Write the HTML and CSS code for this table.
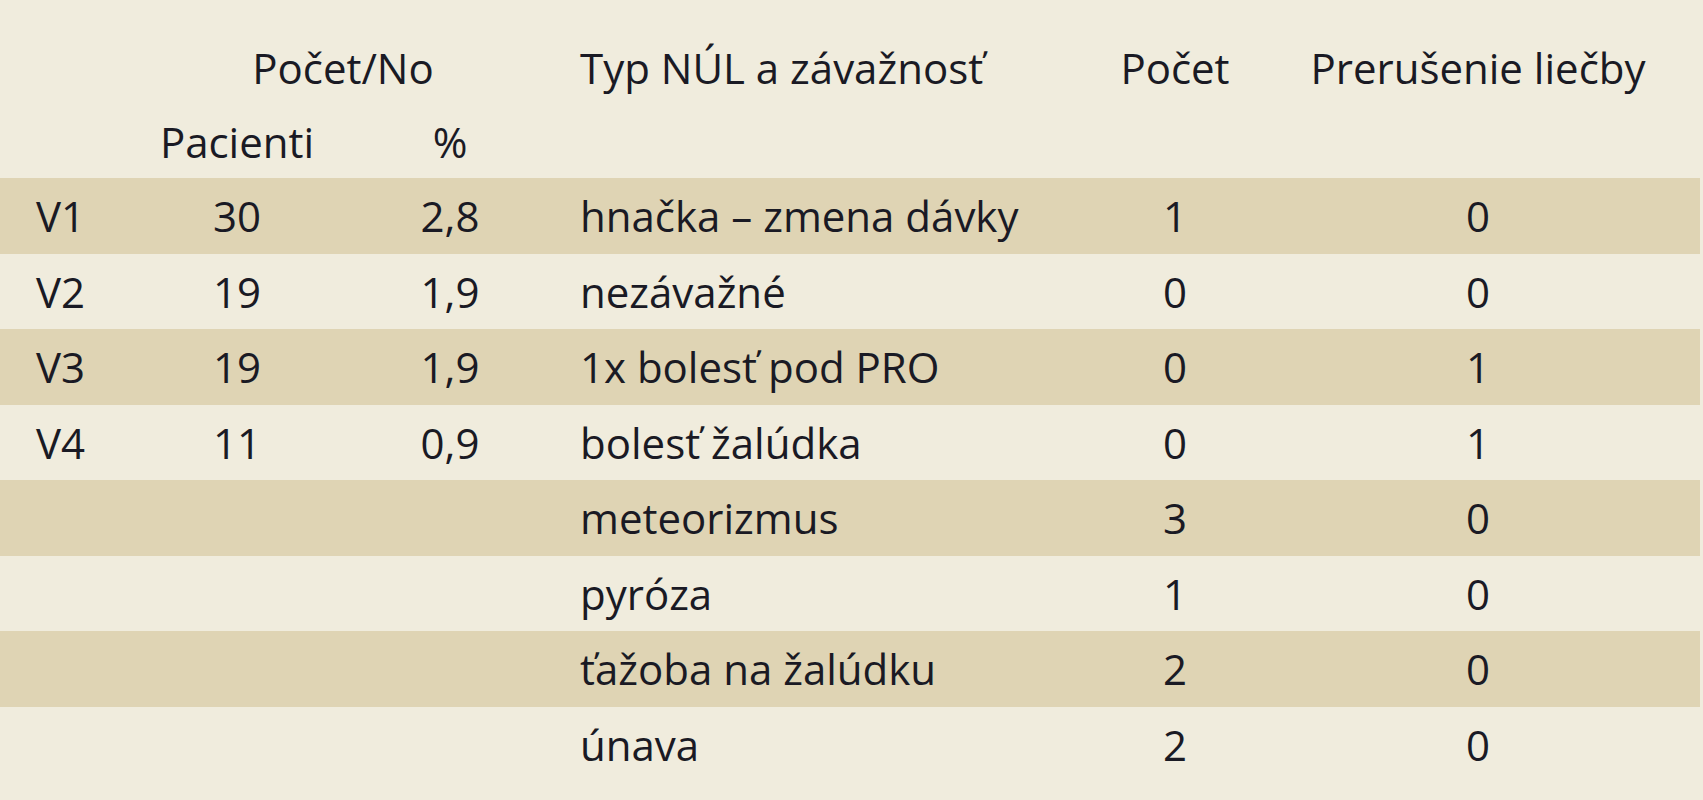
FILE: index.html
```html
<!DOCTYPE html>
<html lang="sk">
<head>
<meta charset="utf-8">
<title>NÚL</title>
<link rel="stylesheet" href="styles.css">
</head>
<body>
<table class="tbl">
  <colgroup>
    <col class="c1"><col class="c2"><col class="c3"><col class="c4"><col class="c5"><col class="c6">
  </colgroup>
  <thead>
    <tr class="h1">
      <th></th>
      <th colspan="2" class="mid">Počet/No</th>
      <th class="left">Typ NÚL a závažnosť</th>
      <th class="mid">Počet</th>
      <th class="last">Prerušenie liečby</th>
    </tr>
    <tr class="h2">
      <th></th>
      <th class="mid">Pacienti</th>
      <th class="mid">%</th>
      <th></th><th></th><th></th>
    </tr>
  </thead>
  <tbody>
    <tr class="shade"><td class="lab">V1</td><td class="mid">30</td><td class="mid">2,8</td><td class="left">hnačka – zmena dávky</td><td class="mid">1</td><td class="last">0</td></tr>
    <tr><td class="lab">V2</td><td class="mid">19</td><td class="mid">1,9</td><td class="left">nezávažné</td><td class="mid">0</td><td class="last">0</td></tr>
    <tr class="shade"><td class="lab">V3</td><td class="mid">19</td><td class="mid">1,9</td><td class="left">1x bolesť pod PRO</td><td class="mid">0</td><td class="last">1</td></tr>
    <tr><td class="lab">V4</td><td class="mid">11</td><td class="mid">0,9</td><td class="left">bolesť žalúdka</td><td class="mid">0</td><td class="last">1</td></tr>
    <tr class="shade"><td></td><td></td><td></td><td class="left">meteorizmus</td><td class="mid">3</td><td class="last">0</td></tr>
    <tr><td></td><td></td><td></td><td class="left">pyróza</td><td class="mid">1</td><td class="last">0</td></tr>
    <tr class="shade"><td></td><td></td><td></td><td class="left">ťažoba na žalúdku</td><td class="mid">2</td><td class="last">0</td></tr>
    <tr><td></td><td></td><td></td><td class="left">únava</td><td class="mid">2</td><td class="last">0</td></tr>
  </tbody>
</table>
</body>
</html>
```

FILE: styles.css
```css
html, body {
  margin: 0;
  padding: 0;
  background: #f0ecdd;
}
body {
  font-family: "Open Sans", Lato, sans-serif;
  font-size: 42px;
  color: #1a1a24;
}
.tbl {
  border-collapse: collapse;
  table-layout: fixed;
  width: 1700px;
  margin-top: 30px;
}
.c1 { width: 130px; }
.c2 { width: 214px; }
.c3 { width: 212px; }
.c4 { width: 504px; }
.c5 { width: 230px; }
.c6 { width: 410px; }
.tbl th, .tbl td {
  padding: 0;
  font-weight: 400;
  white-space: nowrap;
  vertical-align: middle;
}
.tbl .h1, .tbl .h2 { height: 74px; }
.tbl tbody tr { height: 75.5px; }
.tbl .shade { background: #dfd4b4; }
.tbl .lab { text-align: left; padding-left: 36px; }
.tbl .mid { text-align: center; }
.tbl .left { text-align: left; padding-left: 24px; }
.tbl .last { text-align: center; padding-right: 34px; }
```
